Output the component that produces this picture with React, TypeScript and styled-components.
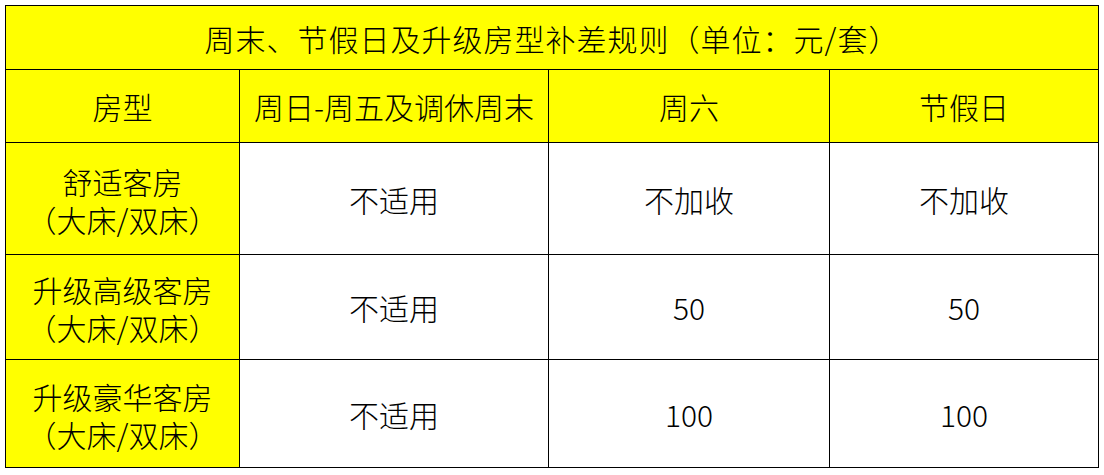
import { createGlobalStyle, styled } from 'styled-components';

const GlobalStyle = createGlobalStyle`
  html, body {
    margin: 0;
    padding: 0;
    background: #fff;
  }
  body {
    font-family: "Noto Sans CJK SC", "Noto Sans", sans-serif;
    color: #000;
  }
`;

const rows = [
  { name: ['舒适客房', '（大床/双床）'], weekday: '不适用', sat: '不加收', holiday: '不加收', height: 112 },
  { name: ['升级高级客房', '（大床/双床）'], weekday: '不适用', sat: '50', holiday: '50', height: 105 },
  { name: ['升级豪华客房', '（大床/双床）'], weekday: '不适用', sat: '100', holiday: '100', height: 108 },
];

const App = () => {
  return (
    <>
      <GlobalStyle />
      <Sheet>
        <Table>
          <colgroup>
            <col style={{ width: 234 }} />
            <col style={{ width: 309 }} />
            <col style={{ width: 281 }} />
            <col style={{ width: 269 }} />
          </colgroup>
          <tbody>
            <tr>
              <Cell colSpan={4} $fill $height={64} $spacing={1}>
                周末、节假日及升级房型补差规则（单位：元/套）
              </Cell>
            </tr>
            <tr>
              <Cell $fill $height={73}>房型</Cell>
              <Cell $fill $height={73}>周日-周五及调休周末</Cell>
              <Cell $fill $height={73}>周六</Cell>
              <Cell $fill $height={73}>节假日</Cell>
            </tr>
            {rows.map((r) => (
              <tr key={r.name[0]}>
                <Cell $fill $height={r.height}>
                  <Label>
                    <span>{r.name[0]}</span>
                    <span>{r.name[1]}</span>
                  </Label>
                </Cell>
                <Cell $height={r.height}>{r.weekday}</Cell>
                <Cell $height={r.height}>{r.sat}</Cell>
                <Cell $height={r.height}>{r.holiday}</Cell>
              </tr>
            ))}
          </tbody>
        </Table>
      </Sheet>
    </>
  );
};

export default App;

const Sheet = styled.div`
  width: 1104px;
  height: 475px;
  padding: 5px 0 0 5px;
  box-sizing: border-box;
`;

const Table = styled.table`
  border-collapse: collapse;
  table-layout: fixed;
  width: 1093px;
`;

const Cell = styled.td<{ $fill?: boolean; $height: number; $spacing?: number }>`
  height: ${(p) => p.$height - 1}px;
  padding: 0;
  border: 1px solid #000;
  background: ${(p) => (p.$fill ? '#ffff00' : '#ffffff')};
  text-align: center;
  vertical-align: middle;
  font-size: 30px;
  font-weight: 300;
  line-height: 1.2;
  white-space: nowrap;
  letter-spacing: ${(p) => p.$spacing ?? 0}px;
`;

const Label = styled.div`
  display: flex;
  flex-direction: column;
  align-items: center;
  line-height: 38px;
  padding-top: 2px;
`;
